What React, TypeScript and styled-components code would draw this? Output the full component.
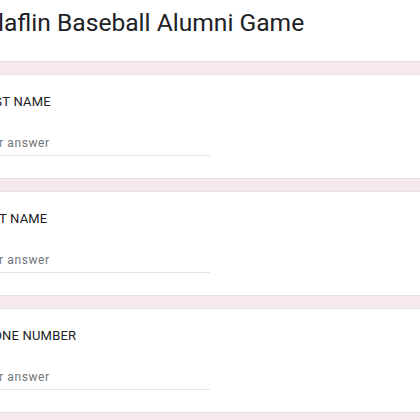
import styled, { createGlobalStyle } from 'styled-components';

const GlobalStyle = createGlobalStyle`
  html, body {
    margin: 0;
    padding: 0;
    background: #ffffff;
    overflow: hidden;
  }
  body {
    font-family: 'Roboto', 'Liberation Sans', sans-serif;
  }
`;

const questions = ['FIRST NAME', 'LAST NAME', 'PHONE NUMBER'];

const App = () => {
  return (
    <>
      <GlobalStyle />
      <Page>
        <TitleCard>
          <Title>Claflin Baseball Alumni Game</Title>
        </TitleCard>
        {questions.map((q) => (
          <QuestionCard key={q}>
            <Label>{q}</Label>
            <AnswerField>
              <Placeholder>Your answer</Placeholder>
            </AnswerField>
          </QuestionCard>
        ))}
      </Page>
    </>
  );
};

const Page = styled.div`
  display: flex;
  flex-direction: column;
  gap: 12px;
  width: 480px;
  margin-left: -25px;
  padding-bottom: 40px;
  background: #f6e9ec;
`;

const TitleCard = styled.div`
  background: #ffffff;
  height: 62px;
  padding: 4px 0 0 7px;
  box-sizing: border-box;
  border-bottom: 1px solid #e3e0e1;
`;

const Title = styled.h1`
  margin: 0;
  font-family: 'Roboto', 'Liberation Sans', sans-serif;
  font-size: 24.6px;
  font-weight: 400;
  line-height: 38px;
  color: #202124;
`;

const QuestionCard = styled.div`
  background: #ffffff;
  height: 105px;
  box-sizing: border-box;
  padding: 17px 0 0 0;
  border-top: 1px solid #e6e3e4;
  border-bottom: 1px solid #e3e0e1;
`;

const Label = styled.div`
  font-size: 13px;
  line-height: 20px;
  color: #202124;
  letter-spacing: 0.2px;
`;

const AnswerField = styled.div`
  margin-top: 20px;
  width: 233px;
  border-bottom: 1px solid #e4e4e4;
  padding: 0 0 3px 0;
  margin-left: 2px;
`;

const Placeholder = styled.span`
  font-size: 12px;
  line-height: 18px;
  letter-spacing: 0.6px;
  color: #70757a;
`;

export default App;
